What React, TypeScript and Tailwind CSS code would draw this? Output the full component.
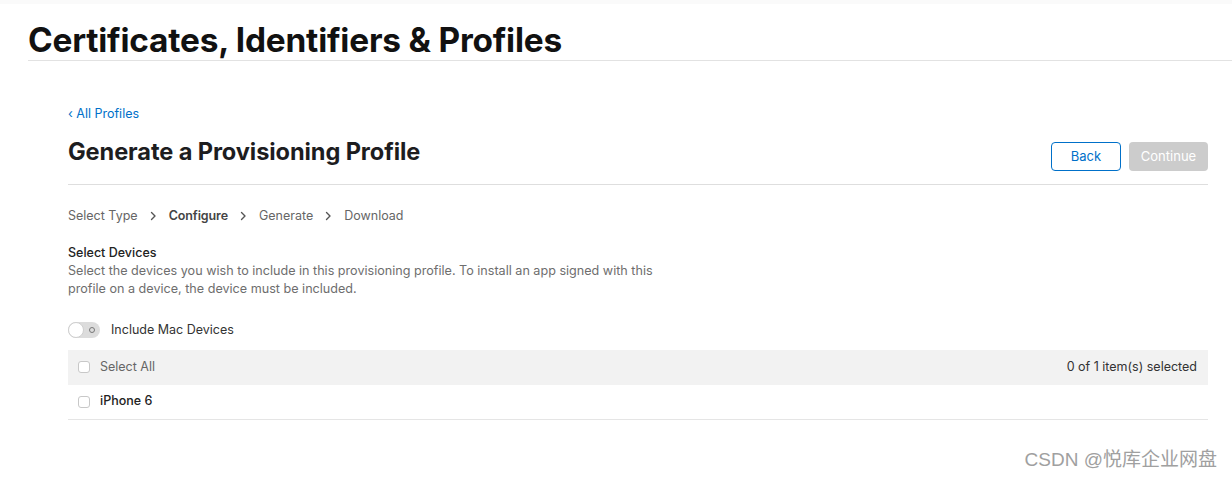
import React from "react";

function Chevron() {
  return (
    <svg width="7" height="10" viewBox="0 0 7 10" className="mx-[12px]">
      <path d="M1.5 1.5 L5 5 L1.5 8.5" fill="none" stroke="#555" strokeWidth="1.4" strokeLinecap="round" strokeLinejoin="round" />
    </svg>
  );
}

function Checkbox() {
  return <span className="inline-block w-[12px] h-[12px] rounded-[3px] border border-[#c8c8c8] bg-white" />;
}

export default function App() {
  return (
    <div className="w-[1232px] h-[479px] bg-white relative overflow-hidden" style={{ fontFamily: "Inter, 'Noto Sans', sans-serif" }}>
      <div className="h-[4px] bg-[#fafafa]" />
      <div className="pl-[28px]">
        <h1 className="text-[33.4px] leading-[40px] font-bold text-[#111] tracking-[-0.2px] pt-[16px]">Certificates, Identifiers &amp; Profiles</h1>
        <div className="h-px bg-[#e2e2e2]" />
      </div>
      <div className="ml-[68px] w-[1140px] pt-[45px]">
        <a className="block text-[12.5px] leading-[16px] text-[#0070c9]">‹ All Profiles</a>
        <div className="flex items-start justify-between mt-[15px] pb-[13px] border-b border-[#dedede]">
          <h2 className="text-[23.6px] leading-[30px] font-bold text-[#1d1d1f] tracking-[-0.1px]">Generate a Provisioning Profile</h2>
          <div className="flex gap-[8px] mt-[5px]">
            <button className="w-[70px] h-[29px] rounded-[4px] border border-[#0070c9] text-[13px] text-[#0070c9] bg-white">Back</button>
            <button className="w-[79px] h-[29px] rounded-[4px] bg-[#cccccc] text-[13px] text-white">Continue</button>
          </div>
        </div>
        <div className="flex items-center mt-[23px] text-[12.5px] leading-[16px] text-[#666]">
          <span>Select Type</span>
          <Chevron />
          <span className="font-semibold text-[#444] tracking-[-0.1px]">Configure</span>
          <Chevron />
          <span>Generate</span>
          <Chevron />
          <span>Download</span>
        </div>
        <div className="mt-[20px] text-[12.5px] font-medium text-[#222] leading-[18px]">Select Devices</div>
        <p className="text-[12.6px] leading-[18px] text-[#6e6e6e] w-[600px]">
          Select the devices you wish to include in this provisioning profile. To install an app signed with this profile on a device, the device must be included.
        </p>
        <div className="flex items-center mt-[23px]">
          <div className="relative w-[32px] h-[16px] rounded-full bg-[#dcdcdc]">
            <span className="absolute left-0 top-0 w-[16px] h-[16px] rounded-full bg-white border border-[#cfcfcf]" />
            <span className="absolute right-[5px] top-[5px] w-[6px] h-[6px] rounded-full border border-[#777]" />
          </div>
          <span className="ml-[11px] text-[12.5px] text-[#333]">Include Mac Devices</span>
        </div>
        <div className="mt-[10px]">
          <div className="h-[35px] bg-[#f2f2f2] flex items-center justify-between pl-[10px] pr-[11px]">
            <div className="flex items-center">
              <Checkbox />
              <span className="ml-[10px] text-[12.5px] text-[#666]">Select All</span>
            </div>
            <span className="text-[12.5px] text-[#333]">0 of 1 item(s) selected</span>
          </div>
          <div className="h-[35px] flex items-center pl-[10px] border-b border-[#e5e5e5]">
            <Checkbox />
            <span className="ml-[10px] text-[12.5px] font-medium text-[#222]">iPhone 6</span>
          </div>
        </div>
      </div>
      <div className="absolute right-[15px] top-[448px] text-[19px] leading-[24px] text-[#a0a0a0]" style={{ fontFamily: "'Liberation Sans', 'Noto Sans CJK SC', sans-serif" }}>
        CSDN @悦库企业网盘
      </div>
    </div>
  );
}
